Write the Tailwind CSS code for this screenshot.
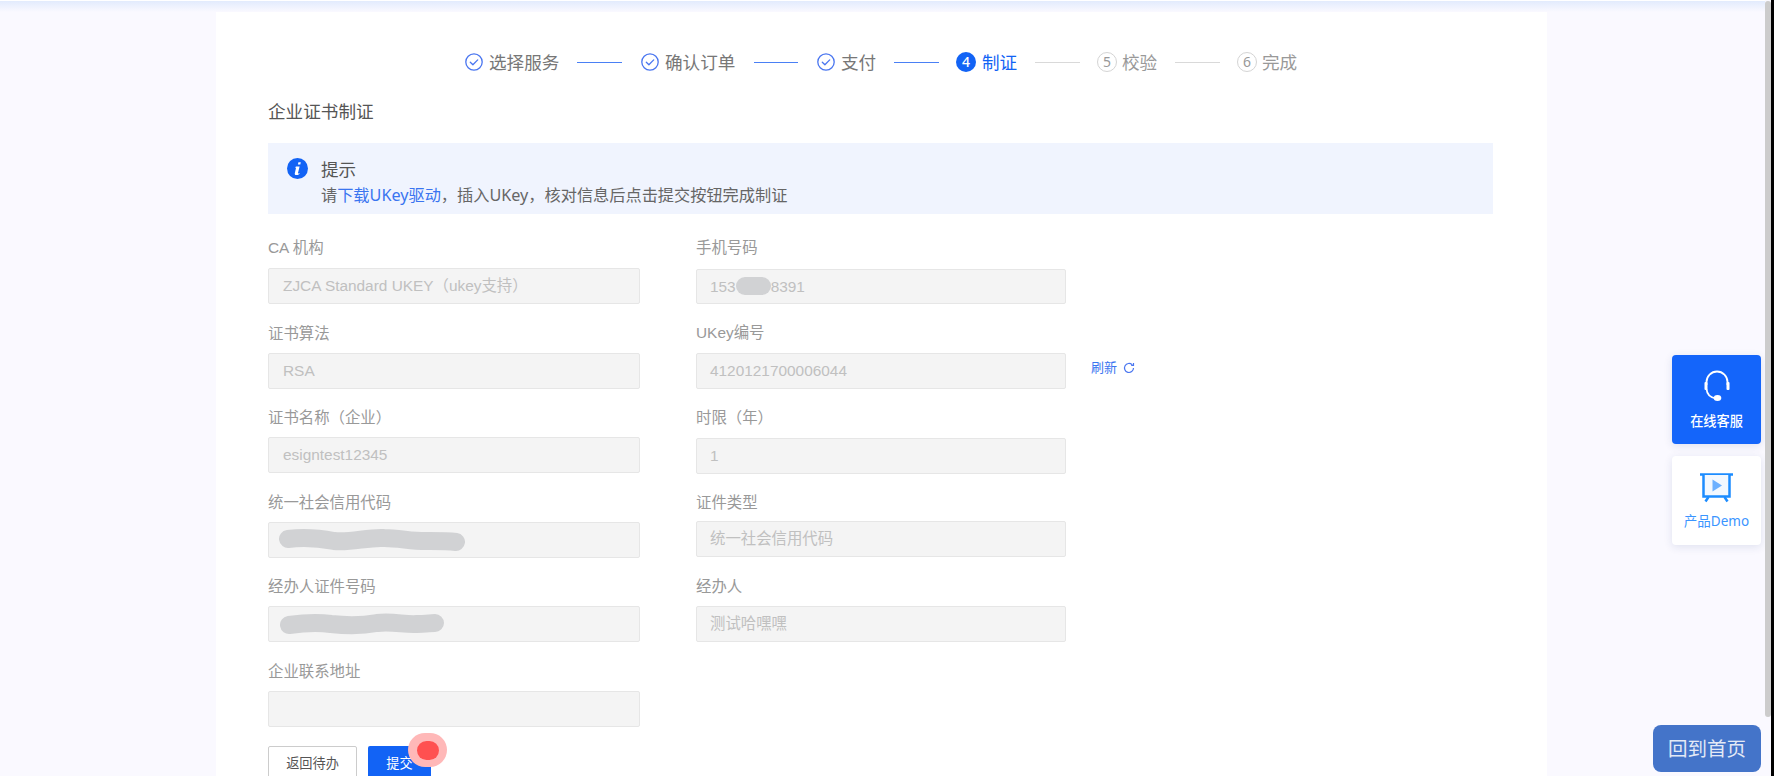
<!doctype html>
<html>
<head>
  <meta charset="UTF-8">
  <meta name="viewport" content="width=device-width, initial-scale=1.0">
  <script src="https://cdn.jsdelivr.net/npm/@tailwindcss/browser@4"></script>
</head>
<body class="relative h-[776px] overflow-hidden bg-[#faf9ff] font-['Noto_Sans','Noto_Sans_CJK_SC',sans-serif]">

  <!-- top shadow -->
  <div class="h-[12px] border-t border-white bg-gradient-to-b from-[#e2ebfd] to-[#faf9ff]"></div>

  <main class="ml-[216px] w-[1331px] h-[764px] bg-white pl-[52px] pr-[54px]">
    <!-- steps -->
    <div class="h-[100px] flex items-start pt-[40px] pl-[197px] text-[17.6px] leading-[20px] text-[#777] whitespace-nowrap">
      <div class="flex items-center h-[20px]">
        <svg class="w-[18px] h-[18px] mr-[6px]" viewBox="0 0 18 18" fill="none" stroke="#4a76f0" stroke-width="1.3"><circle cx="9" cy="9" r="8.2"/><path d="M5.3 9.2l2.6 2.600 4.800-4.900" stroke-linecap="round" stroke-linejoin="round"/></svg>
        <span class="w-[71px]">选择服务</span>
        <span class="block w-[45px] h-px bg-[#4a80f5] ml-[17px] mr-[19px]"></span>
      </div>
      <div class="flex items-center h-[20px]">
        <svg class="w-[18px] h-[18px] mr-[6px]" viewBox="0 0 18 18" fill="none" stroke="#4a76f0" stroke-width="1.3"><circle cx="9" cy="9" r="8.2"/><path d="M5.3 9.2l2.6 2.600 4.800-4.900" stroke-linecap="round" stroke-linejoin="round"/></svg>
        <span class="w-[71px]">确认订单</span>
        <span class="block w-[44px] h-px bg-[#4a80f5] ml-[18px] mr-[19px]"></span>
      </div>
      <div class="flex items-center h-[20px]">
        <svg class="w-[18px] h-[18px] mr-[6px]" viewBox="0 0 18 18" fill="none" stroke="#4a76f0" stroke-width="1.3"><circle cx="9" cy="9" r="8.2"/><path d="M5.3 9.2l2.6 2.600 4.800-4.900" stroke-linecap="round" stroke-linejoin="round"/></svg>
        <span class="w-[35px]">支付</span>
        <span class="block w-[45px] h-px bg-[#4a80f5] ml-[18px] mr-[17px]"></span>
      </div>
      <div class="flex items-center h-[20px]">
        <span class="flex items-center justify-center w-[20px] h-[20px] mr-[6px] rounded-full bg-[#1263f5] text-white text-[14px] font-medium">4</span>
        <span class="w-[35px] text-[#1263f5]">制证</span>
        <span class="block w-[45px] h-px bg-[#d9d9d9] ml-[18px] mr-[17px]"></span>
      </div>
      <div class="flex items-center h-[20px]">
        <span class="flex items-center justify-center w-[20px] h-[20px] mr-[5px] rounded-full border border-[#d4d4d4] text-[#999] text-[14px]">5</span>
        <span class="w-[36px] text-[#999]">校验</span>
        <span class="block w-[45px] h-px bg-[#d9d9d9] ml-[17px] mr-[17px]"></span>
      </div>
      <div class="flex items-center h-[20px]">
        <span class="flex items-center justify-center w-[20px] h-[20px] mr-[5px] rounded-full border border-[#d4d4d4] text-[#999] text-[14px]">6</span>
        <span class="text-[#999]">完成</span>
      </div>
    </div>

    <h2 class="-mt-[13px] h-[44px] text-[17.6px] leading-[24px] text-[#555]">企业证书制证</h2>

    <!-- notice -->
    <div class="w-[1225px] h-[71px] bg-[#f0f4fe] flex pl-[19px] pt-[15px]">
      <svg class="w-[21px] h-[21px] mr-[13px] shrink-0" viewBox="0 0 21 21"><circle cx="10.5" cy="10.5" r="10.5" fill="#1263f5"/><path d="M11.4 4.2h2.4l-.5 2.3h-2.4zM9 8.6h3.6l-1.6 6.5c-.1.5.3.6 1.6-.1l-.2.9c-1.100.8-2.100 1.200-3.200 1.200-1.200 0-1.600-.8-1.400-1.800l1.100-4.700c.1-.6-.1-.9-.9-1z" fill="#fff"/></svg>
      <div>
        <div class="text-[17.6px] leading-[22px] text-[#555]">提示</div>
        <div class="mt-[4px] text-[16.2px] leading-[22px] text-[#666] whitespace-nowrap">请<span class="text-[#3a75f0]">下载UKey驱动</span>，插入UKey，核对信息后点击提交按钮完成制证</div>
      </div>
    </div>

    <!-- form -->
    <div class="flex mt-[22px] font-['Liberation_Sans','Noto_Sans_CJK_SC',sans-serif]">
      <div class="w-[372px] mr-[56px]">
        <div class="mb-[17.600px]">
          <div class="h-6 mb-[8px] leading-6 text-[15.4px] text-[#999]">CA 机构</div>
          <div class="h-[36px] rounded-[2px] border border-[#e6e6e6] bg-[#f4f4f4] pl-[14px] leading-[34px] text-[15.4px] text-[#c0c0c0]">ZJCA Standard UKEY（ukey支持）</div>
        </div>
        <div class="mb-[17.600px]">
          <div class="h-6 mb-[7px] leading-6 text-[15.4px] text-[#999]">证书算法</div>
          <div class="h-[36px] rounded-[2px] border border-[#e6e6e6] bg-[#f4f4f4] pl-[14px] leading-[34px] text-[15.4px] text-[#c0c0c0]">RSA</div>
        </div>
        <div class="mb-[17.600px]">
          <div class="h-6 mb-[7px] leading-6 text-[15.4px] text-[#999]">证书名称（企业）</div>
          <div class="h-[36px] rounded-[2px] border border-[#e6e6e6] bg-[#f4f4f4] pl-[14px] leading-[34px] text-[15.4px] text-[#c0c0c0]">esigntest12345</div>
        </div>
        <div class="mb-[17.600px]">
          <div class="h-6 mb-[7px] leading-6 text-[15.4px] text-[#999]">统一社会信用代码</div>
          <div class="h-[36px] rounded-[2px] border border-[#e6e6e6] bg-[#f4f4f4] pl-[10px] flex items-center">
            <svg class="w-[186px] h-[24px]" viewBox="0 0 186 24" fill="none" stroke="#d1d2d4" stroke-width="18" stroke-linecap="round" stroke-linejoin="round"><path d="M9 11c16-2 30-1 46 2 16 2 34-4 50-3 16 0 30 4 46 3 10 0 18 0 26 1"/></svg>
          </div>
        </div>
        <div class="mb-[17.600px]">
          <div class="h-6 mb-[7px] leading-6 text-[15.4px] text-[#999]">经办人证件号码</div>
          <div class="h-[36px] rounded-[2px] border border-[#e6e6e6] bg-[#f4f4f4] pl-[11px] flex items-center">
            <svg class="w-[164px] h-[24px]" viewBox="0 0 164 24" fill="none" stroke="#d1d2d4" stroke-width="18" stroke-linecap="round" stroke-linejoin="round"><path d="M9 13c14-2 28-3 42-1 18 2 30 2 46-1 16-2 28 2 40 1 8 0 14-1 18-1"/></svg>
          </div>
        </div>
        <div class="mb-[19px]">
          <div class="h-6 mb-[7px] leading-6 text-[15.4px] text-[#999]">企业联系地址</div>
          <div class="h-[36px] rounded-[2px] border border-[#e6e6e6] bg-[#f4f4f4]"></div>
        </div>
        <div class="flex gap-[11px]">
          <button class="w-[89px] h-[36px] rounded-[2px] border border-[#ccc] bg-white text-[13.2px] text-[#555]">返回待办</button>
          <button class="w-[63px] h-[36px] rounded-[2px] bg-[#1263f5] text-[13.2px] text-white">提交</button>
        </div>
      </div>

      <div class="w-[370px]">
        <div class="mb-[17px]">
          <div class="h-6 mb-[9px] leading-6 text-[15.4px] text-[#999]">手机号码</div>
          <div class="relative h-[35px] rounded-[2px] border border-[#e6e6e6] bg-[#f4f4f4] pl-[13px] leading-[33px] text-[15.4px] text-[#c0c0c0]">153<span class="inline-block w-[35px]"></span>8391
            <span class="absolute left-[39px] top-[7px] w-[35px] h-[18px] rounded-full bg-[#d1d2d4]"></span>
          </div>
        </div>
        <div class="relative mb-[17px]">
          <div class="h-6 mb-[8px] leading-6 text-[15.4px] text-[#999]">UKey编号</div>
          <div class="h-[36px] rounded-[2px] border border-[#e6e6e6] bg-[#f4f4f4] pl-[13px] leading-[34px] text-[15.4px] text-[#c0c0c0]">4120121700006044</div>
          <div class="absolute left-[395px] top-[37px] flex items-center whitespace-nowrap text-[13px] leading-[20px] text-[#3a75f0]">
            刷新
            <svg class="w-[12px] h-[12px] ml-[6px] shrink-0" viewBox="0 0 12 12" fill="none" stroke="#4a76f0" stroke-width="1.2"><path d="M10.500 6a4.500 4.500 0 1 1-1.400-3.300M10.500 1v2.300H8.200"/></svg>
          </div>
        </div>
        <div class="mb-[17px]">
          <div class="h-6 mb-[8px] leading-6 text-[15.4px] text-[#999]">时限（年）</div>
          <div class="h-[36px] rounded-[2px] border border-[#e6e6e6] bg-[#f4f4f4] pl-[13px] leading-[34px] text-[15.4px] text-[#c0c0c0]">1</div>
        </div>
        <div class="mb-[18px]">
          <div class="h-6 mb-[6px] leading-6 text-[15.4px] text-[#999]">证件类型</div>
          <div class="h-[36px] rounded-[2px] border border-[#e6e6e6] bg-[#f4f4f4] pl-[13px] leading-[34px] text-[15.4px] text-[#c0c0c0]">统一社会信用代码</div>
        </div>
        <div>
          <div class="h-6 mb-[7px] leading-6 text-[15.4px] text-[#999]">经办人</div>
          <div class="h-[36px] rounded-[2px] border border-[#e6e6e6] bg-[#f4f4f4] pl-[13px] leading-[34px] text-[15.4px] text-[#c0c0c0]">测试哈嘿嘿</div>
        </div>
      </div>
    </div>
  </main>

  <!-- click marker -->
  <span class="absolute left-[408px] top-[733px] flex items-center justify-center w-[39px] h-[34px] rounded-full bg-[#ffb8b8]">
    <span class="block w-[22px] h-[19px] rounded-full bg-[#ff5050]"></span>
  </span>

  <!-- floating buttons -->
  <div class="absolute left-[1672px] top-[355px] w-[89px] flex flex-col gap-[12px]">
    <div class="h-[89px] rounded-[4px] bg-[#1465fa] flex flex-col items-center pt-[15px] text-white shadow-[0_2px_8px_rgba(30,60,120,0.12)]">
      <svg class="w-[28px] h-[32px]" viewBox="0 0 28 32" fill="none" stroke="#fff" stroke-width="1.800"><path d="M3.500 15V12a10.500 10.500 0 0 1 21 0v3"/><path d="M3.500 19c.5 5 4 8.500 9 9.300" /><rect x="1.500" y="12" width="3" height="8" rx="1" fill="#fff" stroke="none"/><rect x="23.500" y="12" width="3" height="8" rx="1" fill="#fff" stroke="none"/><ellipse cx="14.500" cy="28" rx="3.800" ry="3" fill="#fff" stroke="none"/></svg>
      <span class="mt-[11px] text-[13.2px] leading-[16px] font-medium">在线客服</span>
    </div>
    <div class="h-[89px] rounded-[4px] bg-white flex flex-col items-center pt-[17px] text-[#3b95ff] shadow-[0_2px_8px_rgba(30,60,120,0.12)]">
      <svg class="w-[33px] h-[30px]" viewBox="0 0 33 30" fill="none" stroke="#1c8cff" stroke-width="2.500"><path d="M0 1.500h33" /><path d="M3.500 2v21.500h26V2" fill="#f2f8ff"/><path d="M8.500 24l-3 4.500M24.500 24l3 4.500" /><path d="M12.500 6.500l9.500 6-9.500 6z" fill="#6cb0ff" stroke="none"/></svg>
      <span class="mt-[10px] text-[13.5px] leading-[16px]">产品Demo</span>
    </div>
  </div>

  <div class="absolute left-[1653px] top-[725px] w-[108px] h-[47px] rounded-[8px] bg-[#4474c9] flex items-center justify-center text-[19.500px] text-[#e3e9f6]">回到首页</div>

  <!-- scrollbar -->
  <div class="absolute right-0 top-0 w-[9px] h-[776px] bg-[#faf9ff] border-r-[3px] border-black">
    <div class="h-[716px] mt-px rounded-[3px] bg-[#cccccc]"></div>
  </div>
</body>
</html>
